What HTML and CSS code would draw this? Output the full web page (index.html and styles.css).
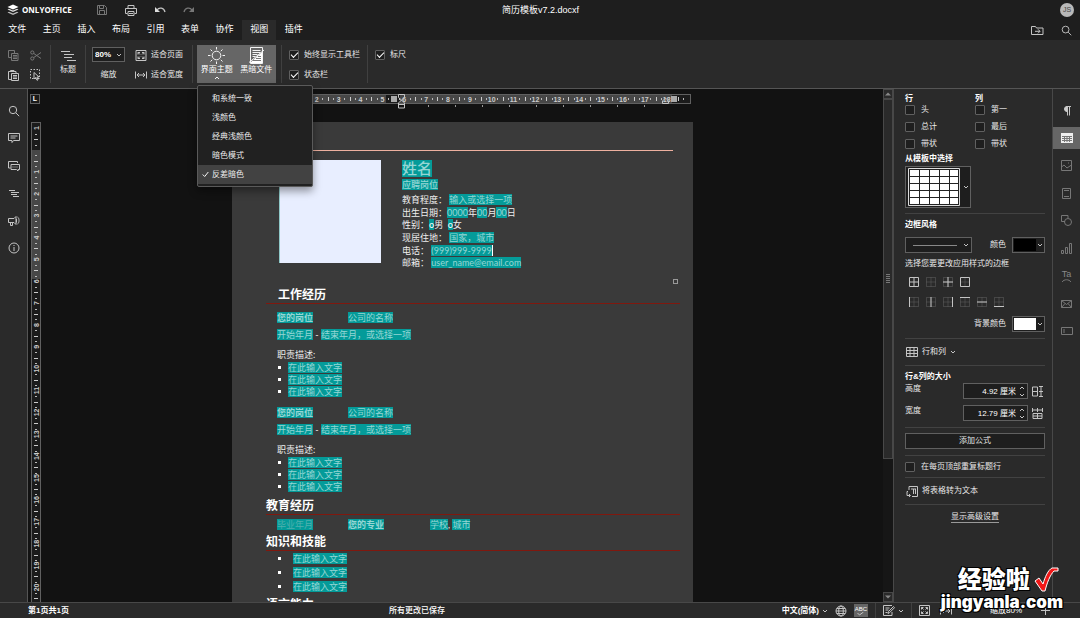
FILE: index.html
```html
<!DOCTYPE html>
<html lang="zh-CN">
<head>
<meta charset="utf-8">
<title>简历模板v7.2.docxf</title>
<link rel="stylesheet" href="styles.css">
</head>
<body>
<svg class="defs" aria-hidden="true">
  <symbol id="chev" viewBox="0 0 6 6"><path d="M1 2l2 2 2-2"/></symbol>
  <symbol id="chev-up" viewBox="0 0 6 6"><path d="M1 4l2-2 2 2"/></symbol>
  <symbol id="search" viewBox="0 0 12 12"><circle cx="5" cy="5" r="3.7"/><path d="M7.8 7.8l3.4 3.4"/></symbol>
  <symbol id="fitpage" viewBox="0 0 11 11"><path d="M.5.5h10v10H.5zM2.500 4.500v-2h2M2.500 2.500l2 2M6.500 2.500h2v2M8.500 2.500l-2 2M2.500 6.500v2h2M2.500 8.500l2-2M8.500 6.500v2h-2M8.500 8.500l-2-2"/></symbol>
  <symbol id="fitwidth" viewBox="0 0 12 10"><path d="M.5 1.500v7M11.500 1.500v7M2 5h8M4 3L2 5l2 2M8 3l2 2-2 2"/></symbol>
  <symbol id="dots" viewBox="0 0 10 10"><path d="M.5.5h9v9h-9zM5 .5v9M.5 5h9" stroke="#626262" stroke-dasharray="1 1"/></symbol>
</svg>

<header class="titlebar">
  <div class="brand">
    <svg width="12" height="12" viewBox="0 0 12 12"><path d="M6 .5l5.500 2.500L6 5.500.5 3z" fill="#fff"/><path d="M.5 5.500l1.500-.7 4 1.800 4-1.800 1.500.7L6 8z" fill="#ddd"/><path d="M.5 8.500L2 7.800l4 1.800 4-1.800 1.500.7L6 11z" fill="#bbb"/></svg>
    <strong>ONLYOFFICE</strong>
  </div>
  <div class="quick">
    <button aria-label="保存" class="dim"><svg width="10" height="10" viewBox="0 0 10 10"><path d="M.5.5h7l2 2v7h-9zM2.500.5v3h4v-3M2.500 9.500v-4h5v4"/></svg></button>
    <button aria-label="打印"><svg width="12" height="11" viewBox="0 0 12 11"><path d="M3 3V.5h6V3M2.500 8.500h-2v-5h11v5h-2M3 6.500h6v4H3zM4 8.500h4"/></svg></button>
    <button aria-label="撤销"><svg width="12" height="8" viewBox="0 0 12 8"><path d="M1 1v5h5z" fill="#ddd" stroke="none"/><path d="M3 4c2-3 7-2.500 8 2" stroke-width="1.300"/></svg></button>
    <button aria-label="重做" class="dim"><svg width="12" height="8" viewBox="0 0 12 8"><path d="M11 1v5H6z" fill="#777" stroke="none"/><path d="M9 4C7 1 2 1.500 1 6" stroke-width="1.300"/></svg></button>
  </div>
  <h1>简历模板v7.2.docxf</h1>
  <span class="avatar">JS</span>
</header>

<div class="tabbar">
  <nav>
    <a href="#">文件</a><a href="#">主页</a><a href="#">插入</a><a href="#">布局</a><a href="#">引用</a><a href="#">表单</a><a href="#">协作</a><a href="#" class="on">视图</a><a href="#">插件</a>
  </nav>
  <div class="tab-right">
    <button aria-label="打开文件位置"><svg width="13" height="11" viewBox="0 0 13 11"><path d="M.5 9.500v-8h4l1 1.500h6.500v6.500zM4 6.300h5M7 4.300l2 2-2 2"/></svg></button>
    <button aria-label="搜索"><svg width="11" height="11"><use href="#search"/></svg></button>
  </div>
</div>

<div class="toolbar">
  <div class="clip">
    <button aria-label="复制" class="dim"><svg width="11" height="11" viewBox="0 0 11 11"><path d="M.5.5h6v7h-6z"/><path d="M3.500 3.500h6.500v7H3.500z" fill="#2a2a2a"/><path d="M5 5.500h4M5 7h4M5 8.500h4"/></svg></button>
    <button aria-label="剪切" class="dim"><svg width="12" height="11" viewBox="0 0 12 11"><circle cx="2.300" cy="2.500" r="1.600"/><circle cx="2.300" cy="8.500" r="1.600"/><path d="M3.700 3.400L11 8.500M3.700 7.600L11 2.500"/></svg></button>
    <button aria-label="粘贴"><svg width="11" height="11" viewBox="0 0 11 11"><path d="M3 9.500H.5v-8H8V3M2.500 1.500V.5H6v1M3.500 3.500h7v7h-7zM5 5.500h4M5 7h4M5 8.500h4"/></svg></button>
    <button aria-label="全选"><svg width="11" height="12" viewBox="0 0 11 12"><path d="M.5.5h9v9h-9z" stroke-dasharray="1.500 1.500"/><path d="M4 3.500v6.500l1.700-1.500L7 11.300l1-.5L6.900 8H9z" fill="#222"/></svg></button>
  </div>
  <i class="sep"></i>
  <button class="big head"><svg width="15" height="12" viewBox="0 0 15 12"><path d="M0 1.500h9M3 4.500h10M3 7.500h8M6 10.500h9"/></svg><span>标题</span></button>
  <i class="sep"></i>
  <div class="zoomer">
    <div class="pick"><select id="zoom"><option>80%</option></select><svg width="6" height="6"><use href="#chev"/></svg></div>
    <label for="zoom">缩放</label>
  </div>
  <div class="pair fit">
    <button><svg width="11" height="11"><use href="#fitpage"/></svg>适合页面</button>
    <button><svg width="12" height="10"><use href="#fitwidth"/></svg>适合宽度</button>
  </div>
  <i class="sep"></i>
  <div class="active">
    <button class="big theme" aria-haspopup="menu" aria-expanded="true"><svg width="19" height="19" viewBox="0 0 19 19"><circle cx="9.500" cy="9.500" r="4.300"/><path d="M9.500 1v2.500M9.500 15.500V18M1 9.500h2.500M15.500 9.500H18M3.500 3.500l1.700 1.700M13.800 13.800l1.700 1.700M3.500 15.500l1.700-1.700M13.800 5.200l1.700-1.700"/></svg><span>界面主题</span><svg width="6" height="6"><use href="#chev-up"/></svg></button>
    <button class="big"><svg width="17" height="19" viewBox="0 0 17 19"><path d="M2.500 1.500h12v16h-12z" fill="#666"/><path d="M3 16L14 6v11H3z" fill="#fff" stroke="none"/><path d="M4.500 4.500h8M4.500 6.500h8M4.500 8.500h5M4.500 10.500h3"/><path d="M10 10.500h3M8 12.500h5M5 14.500h8" stroke="#777"/><path d="M1 16.500L16 4"/></svg><span>黑暗文件</span></button>
    <div class="menu" role="menu">
      <button role="menuitem">和系统一致</button>
      <button role="menuitem">浅颜色</button>
      <button role="menuitem">经典浅颜色</button>
      <button role="menuitem">暗色模式</button>
      <button role="menuitem" class="sel"><svg width="7" height="7" viewBox="0 0 7 7"><path d="M.7 3.500l2 2L6.300 1"/></svg>反差暗色</button>
    </div>
  </div>
  <i class="sep"></i>
  <div class="pair checks">
    <label><input type="checkbox" checked>始终显示工具栏</label>
    <label><input type="checkbox" checked>状态栏</label>
  </div>
  <i class="sep"></i>
  <div class="pair checks">
    <label><input type="checkbox" checked>标尺</label>
  </div>
</div>

<main>
  <aside class="leftbar">
    <button aria-label="查找"><svg width="12" height="12"><use href="#search"/></svg></button>
    <button aria-label="批注"><svg width="12" height="12" viewBox="0 0 12 12"><path d="M.5 1.500h11v7H5.500L4 10.500V8.500H.5zM2.500 4h7M2.500 6h5"/></svg></button>
    <button aria-label="聊天"><svg width="12" height="12" viewBox="0 0 12 12"><path d="M2.500 8H.5V1.500h9V3M3 4.500h8.500v5H10v1.500L8.500 9.500H3z"/><path d="M4.500 7h6" stroke-dasharray="1 1"/></svg></button>
    <button aria-label="标题导航"><svg width="12" height="12" viewBox="0 0 12 12"><path d="M1 2.500h6M3 4.500h8M3 6.500h6M5 8.500h6"/></svg></button>
    <button aria-label="反馈"><svg width="12" height="12" viewBox="0 0 12 12"><path d="M6 3.500H.5v4H6l2 2v-8zM2.500 7.500v3h2v-3M9.500 2c2 1 2 6 0 7M8.500 4v3.500"/></svg></button>
    <button aria-label="关于"><svg width="12" height="12" viewBox="0 0 12 12"><circle cx="6" cy="6" r="5"/><path d="M6 5v4M6 3v1"/></svg></button>
  </aside>

  <section class="editor">
    <div class="corner"><button aria-label="制表位">L</button></div>
    <div class="hruler"><svg id="hruler" width="461" height="20"></svg></div>
    <div class="vruler"><svg id="vruler" width="10" height="480"></svg></div>
    <div class="view">
      <article class="page">
        <div class="rule"></div>
        <div class="intro">
          <div class="photo"></div>
          <div class="info">
            <div class="name"><mark>姓名</mark></div>
            <div class="post"><mark>应聘岗位</mark></div>
            <div class="facts">
              <div>教育程度：&nbsp;<mark>输入或选择一项</mark></div>
              <div>出生日期：<mark>0000</mark>年<mark>00</mark>月<mark>00</mark>日</div>
              <div>性别：<mark class="radio">o</mark>男&nbsp;&nbsp;<mark class="radio">o</mark>女</div>
              <div>现居住地：&nbsp;<mark>国家，城市</mark></div>
              <div>电话：&nbsp;<mark>(999)999-9999</mark><i class="caret"></i></div>
              <div>邮箱：&nbsp;<mark>user_name@email.com</mark></div>
            </div>
          </div>
        </div>
        <div class="anchor"></div>
        <h2 class="inset">工作经历</h2>
        <div class="entry">
          <div class="cols"><b><mark>您的岗位</mark></b><span><mark>公司的名称</mark></span></div>
          <div class="dates"><mark>开始年月</mark>&nbsp;-&nbsp;<mark>结束年月，或选择一项</mark></div>
          <div class="duty">职责描述:</div>
          <ul><li><mark>在此输入文字</mark></li><li><mark>在此输入文字</mark></li><li><mark>在此输入文字</mark></li></ul>
        </div>
        <div class="entry second">
          <div class="cols"><b><mark>您的岗位</mark></b><span><mark>公司的名称</mark></span></div>
          <div class="dates"><mark>开始年月</mark>&nbsp;-&nbsp;<mark>结束年月，或选择一项</mark></div>
          <div class="duty">职责描述:</div>
          <ul><li><mark>在此输入文字</mark></li><li><mark>在此输入文字</mark></li><li><mark>在此输入文字</mark></li></ul>
        </div>
        <h2 class="edu">教育经历</h2>
        <div class="entry school">
          <div class="cols"><span><mark class="faint">毕业年月</mark></span><b><mark>您的专业</mark></b><span><mark>学校</mark>,&nbsp;<mark>城市</mark></span></div>
        </div>
        <h2>知识和技能</h2>
        <ul class="skills"><li><mark>在此输入文字</mark></li><li><mark>在此输入文字</mark></li><li><mark>在此输入文字</mark></li></ul>
        <h2>语言能力</h2>
      </article>
    </div>
  </section>

  <div class="scroll">
    <button aria-label="向上滚动"><svg width="6" height="6" viewBox="0 0 6 6"><path d="M0 4.500l3-3 3 3z"/></svg></button>
    <div class="track"><div class="thumb"><i></i></div></div>
    <button aria-label="向下滚动"><svg width="6" height="6" viewBox="0 0 6 6"><path d="M0 1.500l3 3 3-3z"/></svg></button>
  </div>

  <aside class="panel">
    <div class="opts">
      <strong>行</strong><strong>列</strong>
      <label><input type="checkbox">头</label><label><input type="checkbox">第一</label>
      <label><input type="checkbox">总计</label><label><input type="checkbox">最后</label>
      <label><input type="checkbox">带状</label><label><input type="checkbox">带状</label>
    </div>
    <strong class="t-label">从模板中选择</strong>
    <button class="template" aria-label="表格模板"><svg width="52" height="38" viewBox="0 0 52 38"><path d="M.5.500h51v37H.5z" stroke="#ddd" fill="#222"/><path d="M2 2h48v34H2z" fill="#fff" stroke="none"/><path d="M11.500 2v34M21.500 2v34M31.500 2v34M41.500 2v34M2 8.500h48M2 15.500h48M2 22.500h48M2 29.500h48" stroke="#222"/></svg><svg width="6" height="6"><use href="#chev"/></svg></button>
    <hr>
    <strong class="b-label">边框风格</strong>
    <div class="line b-row">
      <button class="drop stroke" aria-label="线条样式"><i></i><svg width="6" height="6"><use href="#chev"/></svg></button>
      <span class="lab">颜色</span>
      <button class="drop swatch" aria-label="边框颜色"><i></i><svg width="6" height="6"><use href="#chev"/></svg></button>
    </div>
    <div class="hint">选择您要更改应用样式的边框</div>
    <div class="borders">
      <button aria-label="全部"><svg width="10" height="10"><path d="M.5.5h9v9h-9zM5 .5v9M.5 5h9"/></svg></button>
      <button aria-label="无"><svg width="10" height="10"><use href="#dots"/></svg></button>
      <button aria-label="内部"><svg width="10" height="10"><use href="#dots"/><path d="M5 0v10M0 5h10"/></svg></button>
      <button aria-label="外部"><svg width="10" height="10"><use href="#dots"/><path d="M.5.5h9v9h-9z"/></svg></button>
      <i></i><i></i>
      <button aria-label="左"><svg width="10" height="10"><use href="#dots"/><path d="M.5 0v10"/></svg></button>
      <button aria-label="垂直"><svg width="10" height="10"><use href="#dots"/><path d="M5 0v10"/></svg></button>
      <button aria-label="右"><svg width="10" height="10"><use href="#dots"/><path d="M9.500 0v10"/></svg></button>
      <button aria-label="上"><svg width="10" height="10"><use href="#dots"/><path d="M0 .5h10"/></svg></button>
      <button aria-label="水平"><svg width="10" height="10"><use href="#dots"/><path d="M0 5h10"/></svg></button>
      <button aria-label="下"><svg width="10" height="10"><use href="#dots"/><path d="M0 9.500h10"/></svg></button>
    </div>
    <div class="line bg-row">
      <span class="lab">背景颜色</span>
      <button class="drop swatch white" aria-label="背景颜色"><i></i><svg width="6" height="6"><use href="#chev"/></svg></button>
    </div>
    <hr>
    <button class="line rc"><svg width="12" height="10" viewBox="0 0 12 10"><path d="M.5.5h11v9H.5zM4 .5v9M8 .5v9M.5 3.500h11M.5 6.500h11"/></svg>行和列<svg width="6" height="6"><use href="#chev"/></svg></button>
    <hr>
    <strong class="s-label">行&amp;列的大小</strong>
    <div class="size">
      <label for="h">高度</label><div class="spin"><input id="h" value="4.92 厘米"><span><button aria-label="增加高度"><svg width="6" height="6"><use href="#chev-up"/></svg></button><button aria-label="减少高度"><svg width="6" height="6"><use href="#chev"/></svg></button></span></div>
      <button aria-label="分布行"><svg width="11" height="11" viewBox="0 0 11 11"><path d="M.5 1v9M.5 1h5v9h-5M.5 5.500h5M7 .5h4M7 5.500h4M7 10.500h4M9 .5v10"/></svg></button>
      <label for="w">宽度</label><div class="spin"><input id="w" value="12.79 厘米"><span><button aria-label="增加宽度"><svg width="6" height="6"><use href="#chev-up"/></svg></button><button aria-label="减少宽度"><svg width="6" height="6"><use href="#chev"/></svg></button></span></div>
      <button aria-label="分布列"><svg width="11" height="11" viewBox="0 0 11 11"><path d="M1 5.500h9v5H1zM5.500 5.500v5M1 8h9M.5 0v4M5.500 0v4M10.500 0v4M.5 2h10"/></svg></button>
    </div>
    <hr>
    <button class="formula">添加公式</button>
    <hr>
    <label class="repeat"><input type="checkbox">在每页顶部重复标题行</label>
    <hr>
    <button class="line convert"><svg width="12" height="11" viewBox="0 0 12 11"><path d="M3 4V.5h8.500v10H6M5 3h5M9.500 3v5M7.500 3v5M2 5.500H1v4h3M3 8l1.500 1.500L3 11"/></svg>将表格转为文本</button>
    <hr>
    <a href="#" class="adv">显示高级设置</a>
  </aside>

  <aside class="rightbar">
    <div class="rail">
    <button aria-label="段落设置"><svg width="12" height="12" viewBox="0 0 12 12"><path d="M6 1.500a2.200 2.200 0 0 0 0 5z" fill="#ccc" stroke="#ccc"/><path d="M6.500 1v9.500M8.500 1v9.500M5.500 1.500H10"/></svg></button>
    <button aria-label="表格设置" class="on"><svg width="12" height="10" viewBox="0 0 12 10"><path d="M0 0h12v10H0z" fill="#eee" stroke="none"/><path d="M1 3.500h10M1 5.500h10M1 7.500h10M3.500 3v6M6 3v6M8.500 3v6" stroke="#777"/></svg></button>
    <button aria-label="图片设置" class="dim"><svg width="11" height="11" viewBox="0 0 11 11"><path d="M.5.5h10v10H.5zM.5 7l2.500-2 3 3 4.500-3"/><path d="M7 3h1"/></svg></button>
    <button aria-label="页眉页脚" class="dim"><svg width="9" height="11" viewBox="0 0 9 11"><path d="M.5.5h8v10h-8zM2 2.500h5M2 8.500h5"/></svg></button>
    <button aria-label="形状设置" class="dim"><svg width="11" height="11" viewBox="0 0 11 11"><path d="M4 6.500H.5v-6h6.500V3"/><circle cx="7" cy="7" r="3.500"/></svg></button>
    <button aria-label="图表设置" class="dim"><svg width="11" height="11" viewBox="0 0 11 11"><path d="M.5 7.500h2v3h-2zM4.500 4.500h2v6h-2zM8.500.5h2v10h-2z"/></svg></button>
    <button aria-label="艺术字" class="dim ta"><span>Ta</span><svg width="9" height="3" viewBox="0 0 9 3"><path d="M0 3c2-3 7-3 9 0"/></svg></button>
    <button aria-label="邮件合并" class="dim"><svg width="11" height="8" viewBox="0 0 11 8"><path d="M.5.5h10v7H.5zM.5.5l5 4 5-4M.5 7.500l3.500-4M10.500 7.500L7 3.500"/></svg></button>
    <button aria-label="表单设置" class="dim"><svg width="12" height="8" viewBox="0 0 12 8"><path d="M.5.5h11v7H.5zM3 2v4"/></svg></button>
    </div>
  </aside>
</main>

<footer>
  <span class="pages">第1页共1页</span>
  <span class="saved">所有更改已保存</span>
  <div class="tools">
    <button class="lang">中文(简体)<svg width="6" height="6"><use href="#chev"/></svg></button>
    <button aria-label="文档语言"><svg width="12" height="12" viewBox="0 0 12 12"><circle cx="6" cy="6" r="5"/><ellipse cx="6" cy="6" rx="2.300" ry="5"/><path d="M1 6h10M2 3.500h8M2 8.500h8"/></svg></button>
    <button class="abc" aria-label="拼写检查"><span>ABC</span><svg width="7" height="4" viewBox="0 0 7 4"><path d="M.5 1l2 2L6.500 0"/></svg></button>
    <i class="sep"></i>
    <button class="track-btn" aria-label="修订"><svg width="12" height="12" viewBox="0 0 12 12"><path d="M9 7v3.500H.5v-10H9M2.500 3h4M2.500 5h3M2.500 7.500h2M5 8.500l.5-2L10.500 1.500l1 1.200-5 5z"/></svg><svg width="6" height="6"><use href="#chev"/></svg></button>
    <i class="sep"></i>
    <div class="zoomset">
      <button aria-label="适合页面"><svg width="11" height="11"><use href="#fitpage"/></svg></button>
      <button aria-label="适合宽度"><svg width="12" height="10"><use href="#fitwidth"/></svg></button>
      <button aria-label="缩小"><svg width="9" height="9"><path d="M0 4.500h9"/></svg></button>
      <button class="pct">缩放80%</button>
      <button aria-label="放大"><svg width="9" height="9"><path d="M0 4.500h9M4.500 0v9"/></svg></button>
    </div>
  </div>
</footer>

<div class="stamp">
  <div class="stamp-top">经验啦<svg width="25" height="26" viewBox="0 0 25 26"><path d="M1 14l4-3 4 6C11 10 14 3 18 1h6v3h-4c-4 4-7 12-9 20H8z" fill="#f01818" stroke="#fff" stroke-width="1"/></svg></div>
  <div class="stamp-url">jingyanla.com</div>
</div>
<script src="rulers.js"></script>
</body>
</html>
```
FILE: styles.css
```css
* { box-sizing: border-box; }
body {
  margin: 0; height: 100vh; overflow: hidden;
  display: flex; flex-direction: column;
  background: #1e1e1e; color: #e8e8e8;
  font: 8px/12px "Liberation Sans", "Noto Sans CJK SC", sans-serif;
}
button, input, select { font: inherit; color: inherit; }
button {
  background: none; border: 0; padding: 0; margin: 0;
  display: flex; align-items: center; justify-content: center; white-space: nowrap;
}
a { color: inherit; text-decoration: none; }
svg { display: block; flex: none; fill: none; stroke: #c4c4c4; stroke-width: 1; }
.defs { position: absolute; width: 0; height: 0; }
.dim svg { stroke: #777; }
label { display: flex; align-items: center; white-space: nowrap; }
input[type=checkbox] {
  appearance: none; width: 10px; height: 10px; margin: 0 5px 0 0; flex: none;
  border: 1px solid #606060; background: #1e1e1e; border-radius: 1px;
  display: grid; place-items: center;
}
input[type=checkbox]:checked::after {
  content: ""; width: 6px; height: 3px; margin-bottom: 2px;
  border: solid #fff; border-width: 0 0 1px 1px; transform: rotate(-45deg);
}

.titlebar { flex: none; height: 20px; display: grid; grid-template-columns: 1fr auto 1fr; grid-template-rows: 20px; align-items: center; padding: 0 6px 0 7px; }
.brand { display: flex; align-items: center; gap: 3px; font-family: "Open Sans", sans-serif; font-size: 8px; color: #fff; grid-area: 1 / 1; }
.brand svg { stroke: none; }
.quick { grid-area: 1 / 1; display: flex; gap: 18px; margin-left: 89px; }
.quick button { width: 11px; height: 12px; }
.titlebar h1 { margin: 0; font-size: 9px; font-weight: normal; color: #fff; grid-area: 1 / 2; }
.avatar { grid-area: 1 / 3; justify-self: end; width: 14px; height: 14px; line-height: 14px; border-radius: 50%; background: #b9b9b9; color: #444; font-size: 7px; text-align: center; }

.tabbar { flex: none; height: 20px; display: flex; justify-content: space-between; color: #fff; font-size: 9px; }
.tabbar nav { width: 311px; display: grid; grid-template-columns: repeat(9, 1fr); }
.tabbar a { line-height: 19px; text-align: center; }
.tabbar a.on { background: #2a2a2a; }
.tab-right { display: flex; gap: 17px; padding-right: 8px; }

.toolbar { flex: none; height: 49px; padding: 5px 0 5px 8px; display: flex; background: #2a2a2a; border-bottom: 1px solid #555; }
.sep { flex: none; width: 1px; background: #404040; }
.clip { width: 42px; display: grid; grid-template-columns: 22px 12px; grid-template-rows: 20px 20px; justify-items: start; }
.big { flex-direction: column; justify-content: flex-start; line-height: 10px; }
.head { width: 34px; padding-top: 5px; gap: 3px; }
.zoomer { width: 45px; padding: 2px 0 0 6px; }
.zoomer label { width: 33px; justify-content: center; margin-top: 7px; }
.pick { position: relative; width: 33px; height: 15px; border: 1px solid #606060; background: #1e1e1e; }
.pick select { appearance: none; background: none; border: 0; padding: 0 2px; margin: 0; width: 100%; height: 100%; color: #fff; display: block; font-weight: bold; }
.pick svg { position: absolute; right: 2px; top: 4px; pointer-events: none; }
.pair { display: grid; grid-template-rows: 20px 20px; justify-items: start; }
.fit { width: 61px; padding-left: 4px; }
.fit button svg { width: 12px; margin-right: 4px; }
.active { position: relative; display: flex; margin: 0 5px 0 4px; height: 38px; background: #666; color: #fff; width: 79px; }
.active svg { stroke: #f4f4f4; }
.active .big { width: 50%; padding-top: 1px; }
.menu { position: absolute; z-index: 5; left: 0; top: 40px; width: 116px; padding: 3px 0 2px; background: #212121; border: 1px solid #5a5a5a; border-radius: 2px; box-shadow: 0 4px 8px #0006; color: #eee; }
.menu button { width: 100%; height: 19px; justify-content: flex-start; padding-left: 14px; }
.menu .sel { background: #424242; padding-left: 4px; gap: 3px; }
.checks { padding: 0 7px; }

main { flex: 1; min-height: 0; display: flex; }
.leftbar { flex: none; width: 28px; background: #2a2a2a; border-right: 1px solid #555; padding-top: 8px; display: grid; align-content: start; grid-template-rows: 27px 28px 28px 27px 27px 28px; }
.editor { flex: 1; min-width: 0; display: grid; grid-template-columns: 14px 1fr; grid-template-rows: 33px minmax(0, 1fr); background: #121212; }
.corner { padding: 5px 0 0 2px; }
.corner button { width: 10px; height: 10px; border: 1px solid #606060; background: #1a1a1a; font-weight: bold; line-height: 8px; font-size: 7px; color: #fff; }
.hruler { padding-top: 5px; }
.hruler svg { margin: 0 auto; }
.vruler { padding-left: 3px; overflow: hidden; }
.view { overflow: hidden; }

.page { width: 461px; margin: 0 auto; background: #3a3a3a; color: #eee; font: 9px/12px Lato, "Noto Sans CJK SC", sans-serif; padding-bottom: 60px; }
mark { display: inline-block; line-height: 11px; height: 11px; background: #049b99; color: #95d6d4; vertical-align: top; white-space: nowrap; }
.rule { height: 29px; margin: 0 20px 0 46px; border-bottom: 1px solid #eeb09f; }
.intro { display: flex; gap: 21px; padding: 9px 0 0 47px; }
.photo { width: 102px; height: 103px; background: #e8eeff; border-left: 1px solid #8fc8c8; }
.name { height: 19px; font-weight: 500; }
.name mark { font-size: 15px; line-height: 17px; height: 17px; }
.post { height: 15px; font-weight: 500; }
.facts { display: grid; grid-template-rows: 13px 12px 13px 13px 12px 13px; white-space: nowrap; }
.radio { color: #fff; }
.caret { display: inline-block; width: 1px; height: 11px; background: #fff; vertical-align: top; }
.anchor { width: 5px; height: 5px; border: 1px solid #999; margin: 9px 15px 0 auto; }
.page h2 { margin: 3px 13px 0 34px; font-size: 12px; line-height: 16px; font-weight: 700; color: #fff; border-bottom: 1px solid #80180e; }
.page h2.inset { padding-left: 12px; margin-top: 3px; }
.page h2.edu { margin-top: 5px; }
.entry { padding: 8px 12px 0 45px; }
.entry.second { padding-top: 9px; }
.entry.school { padding-top: 4px; }
.cols { display: grid; grid-template-columns: 71px 82px 1fr; }
.dates { margin-top: 5px; }
.duty { margin-top: 8px; }
.faint { color: #50b0ae; }
.page ul { list-style: none; margin: 1px 0 0; padding: 0; }
.page li { height: 12px; display: flex; align-items: flex-start; }
.page li::before { content: ""; width: 3px; height: 3px; margin: 4px 7px 0 1px; background: #fff; }
.page .skills { padding-left: 45px; }
.page .skills li { height: 14px; padding-top: 1px; }
.page .skills li::before { margin-right: 12px; }

.scroll { flex: none; width: 10px; background: #161616; display: flex; flex-direction: column; }
.scroll button { height: 10px; border: 1px solid #484848; background: #2a2a2a; }
.scroll button svg { fill: #888; stroke: none; }
.track { flex: 1; }
.thumb { height: 73%; background: #2a2a2a; border: 1px solid #484848; display: grid; place-items: center; }
.thumb i { width: 4px; height: 9px; background: repeating-linear-gradient(#777 0 1px, transparent 1px 2px); }

.panel { flex: none; width: 160px; background: #2a2a2a; border: solid #484848; border-width: 0 1px; padding: 5px 7px 0 11px; color: #e8e8e8; display: flex; flex-direction: column; }
.panel strong { color: #fff; }
.panel hr { width: 100%; height: 1px; border: 0; background: #424242; margin: 0; }
.panel input[type=checkbox] { margin-right: 6px; }
.opts { display: grid; grid-template-columns: 1fr 1fr; grid-template-rows: 7px 17px 17px 17px; align-items: center; }
.opts strong { line-height: 8px; padding-top: 2px; }
.t-label { margin-top: 1px; }
.template { width: 66px; height: 42px; margin: 1px 0 5px; border: 1px solid #606060; background: #1e1e1e; gap: 3px; }
.b-label { margin: 5px 0 6px; }
.line { display: flex; align-items: center; }
.lab { margin-left: auto; margin-right: 6px; }
.drop { height: 16px; border: 1px solid #606060; background: #1e1e1e; }
.stroke { width: 67px; justify-content: space-between; padding: 0 2px 0 7px; }
.stroke i { width: 44px; height: 1px; background: #888; }
.swatch { width: 33px; justify-content: space-between; padding: 0 1px; }
.swatch i { width: 22px; height: 12px; background: #000; }
.swatch.white i { background: #fff; }
.hint { margin: 5px 0 7px; white-space: nowrap; }
.borders { display: grid; grid-template-columns: repeat(6, 11px); gap: 10px 6px; margin-left: 3px; justify-content: start; align-items: center; }
.bg-row { margin: 9px 0 6px; }
.rc { justify-content: flex-start; gap: 4px; height: 26px; padding-left: 1px; }
.s-label { margin-top: 5px; }
.size { display: grid; grid-template-columns: 58px 65px 1fr; grid-template-rows: 16px 16px; row-gap: 6px; margin-bottom: 6px; }
.size > button { justify-content: flex-end; padding-right: 2px; }
.size > label { align-items: flex-start; }
.spin { display: flex; border: 1px solid #606060; background: #1e1e1e; }
.spin input { width: 52px; min-width: 0; border: 0; padding: 1px 0 0; background: none; text-align: right; color: #fff; }
.spin span { flex: 1; display: grid; place-items: center; }
.formula { width: 100%; height: 16px; margin: 5px 0 6px; border: 1px solid #606060; background: #1e1e1e; }
.repeat { height: 21px; }
.convert { justify-content: flex-start; gap: 4px; height: 26px; padding-left: 1px; }
.adv { align-self: center; margin-top: 6px; line-height: 11px; border-bottom: 1px solid #999; }
.rightbar { flex: none; width: 27px; background: #2a2a2a; padding-top: 8px; }
.rail { height: 248px; display: grid; grid-template-rows: repeat(9, 1fr); align-items: center; }
.rail button { width: 100%; height: 22px; }
.rail .on { background: #666; }
.ta { flex-direction: column; color: #888; font-size: 9px; line-height: 9px; }

footer { flex: none; height: 16px; background: #2a2a2a; border-top: 1px solid #484848; display: flex; align-items: center; color: #fff; padding: 0 30px 0 28px; }
.pages { width: 361px; font-weight: bold; }
.tools { margin-left: auto; display: flex; align-items: center; height: 15px; gap: 7px; }
.zoomset { display: flex; align-items: center; gap: 10px; }
.saved { font-weight: 500; }
.lang { gap: 3px; font-weight: bold; }
.tools .sep { height: 15px; }
.abc { flex-direction: column; width: 14px; height: 13px; background: #666; font-size: 6px; line-height: 6px; }
.track-btn { gap: 3px; }
.pct { padding: 0 9px; }

.stamp { position: absolute; right: 17px; bottom: 6px; z-index: 10; color: #fff; font-family: Inter, "Noto Sans CJK SC", sans-serif; font-weight: 900; text-shadow: 1px 1px 0 #000, -1px -1px 0 #000, 1px -1px 0 #000, -1px 1px 0 #000; pointer-events: none; }
.stamp-top { display: flex; align-items: center; gap: 4px; font-size: 24px; line-height: 26px; padding-left: 17px; }
.stamp-url { font-size: 17px; line-height: 19px; }

#hruler text, #vruler text { font: bold 7px "Liberation Sans", sans-serif; fill: #ccc; stroke: none; text-anchor: middle; }
```
FILE: rulers.js
```javascript
const NS = "http://www.w3.org/2000/svg";
const CM = 21.87;

function add(svg, tag, attrs, text) {
  const el = document.createElementNS(NS, tag);
  for (const key in attrs) el.setAttribute(key, attrs[key]);
  if (text !== undefined) el.textContent = text;
  svg.appendChild(el);
}

function box(svg, x, y, width, height, fill, stroke) {
  add(svg, "rect", { x, y, width, height, fill, stroke: stroke || "none" });
}

const h = document.getElementById("hruler");
box(h, 0.5, 0.5, 458, 9, "#1b1b1b", "#606060");
box(h, 41, 1, 113, 8, "#474747");
box(h, 168, 1, 272, 8, "#474747");
for (let q = -6; q < 76; q++) {
  const x = 41 + (q * CM) / 4;
  if (x < 2 || x > 457) continue;
  if (q % 4 === 0) {
    if (q) add(h, "text", { x, y: 7.5 }, Math.abs(q / 4));
  } else if (q % 2 === 0) box(h, Math.round(x), 3, 1, 4, "#ccc");
  else box(h, Math.round(x), 4, 1, 2, "#bbb");
}
for (let x = 196; x < 430; x += 27) box(h, x, 11, 1, 2, "#999");
box(h, 159, 2, 6, 6, "#aaa");
box(h, 439, 2, 6, 6, "#aaa");
add(h, "path", { d: "M166.500.5h6v3l-3 2.500-3-2.500zM166.500 12V9l3-3 3 3v5h-6zM166.500 10.500h6M430.500 9.500V7l3-3 3 3v2.500z" });

const v = document.getElementById("vruler");
box(v, 0.5, 0.5, 9, 499, "#1b1b1b", "#606060");
box(v, 1, 28, 8, 129, "#474747");
for (let q = -4; q < 83; q++) {
  const y = 28 + (q * CM) / 4;
  if (q % 4 === 0) {
    if (q) add(v, "text", { transform: `translate(7.5 ${y}) rotate(-90)` }, Math.abs(q / 4));
  } else if (q % 2 === 0) box(v, 3, Math.round(y), 4, 1, "#ccc");
  else box(v, 4, Math.round(y), 2, 1, "#bbb");
}
```
